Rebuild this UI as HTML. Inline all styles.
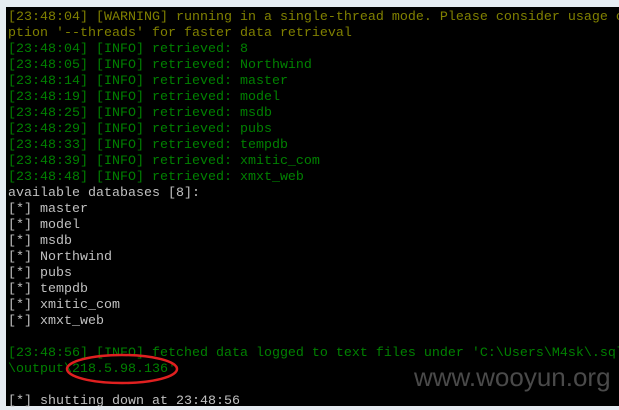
<html><head><style>
body{margin:0;width:619px;height:406px;background:#e6ecf2;overflow:hidden;position:relative}
#t{position:absolute;left:6px;top:7px;right:0;bottom:0;background:#000}
pre{margin:0;position:absolute;left:8px;top:10px;font:13.33px/16px "Liberation Mono",monospace;color:#c0c0c0;white-space:pre;letter-spacing:0}
.y{color:#808000}.g{color:#008000}
#w{position:absolute;left:414px;top:362px;font:26px "Liberation Sans",sans-serif;color:#4a4a4a}
</style></head><body><div id="t"></div>
<pre><span class="y">[23:48:04] [WARNING] running in a single-thread mode. Please consider usage of
ption '--threads' for faster data retrieval</span>
<span class="g">[23:48:04] [INFO] retrieved: 8
[23:48:05] [INFO] retrieved: Northwind
[23:48:14] [INFO] retrieved: master
[23:48:19] [INFO] retrieved: model
[23:48:25] [INFO] retrieved: msdb
[23:48:29] [INFO] retrieved: pubs
[23:48:33] [INFO] retrieved: tempdb
[23:48:39] [INFO] retrieved: xmitic_com
[23:48:48] [INFO] retrieved: xmxt_web</span>
available databases [8]:
[*] master
[*] model
[*] msdb
[*] Northwind
[*] pubs
[*] tempdb
[*] xmitic_com
[*] xmxt_web

<span class="g">[23:48:56] [INFO] fetched data logged to text files under 'C:\Users\M4sk\.sql
\output\218.5.98.136'</span>

[*] shutting down at 23:48:56</pre>
<div id="w">www.wooyun.org</div>
<svg style="position:absolute;left:0;top:0" width="619" height="406"><ellipse cx="122" cy="369" rx="55" ry="14" fill="none" stroke="#e02020" stroke-width="2.5"/></svg>
</body></html>
